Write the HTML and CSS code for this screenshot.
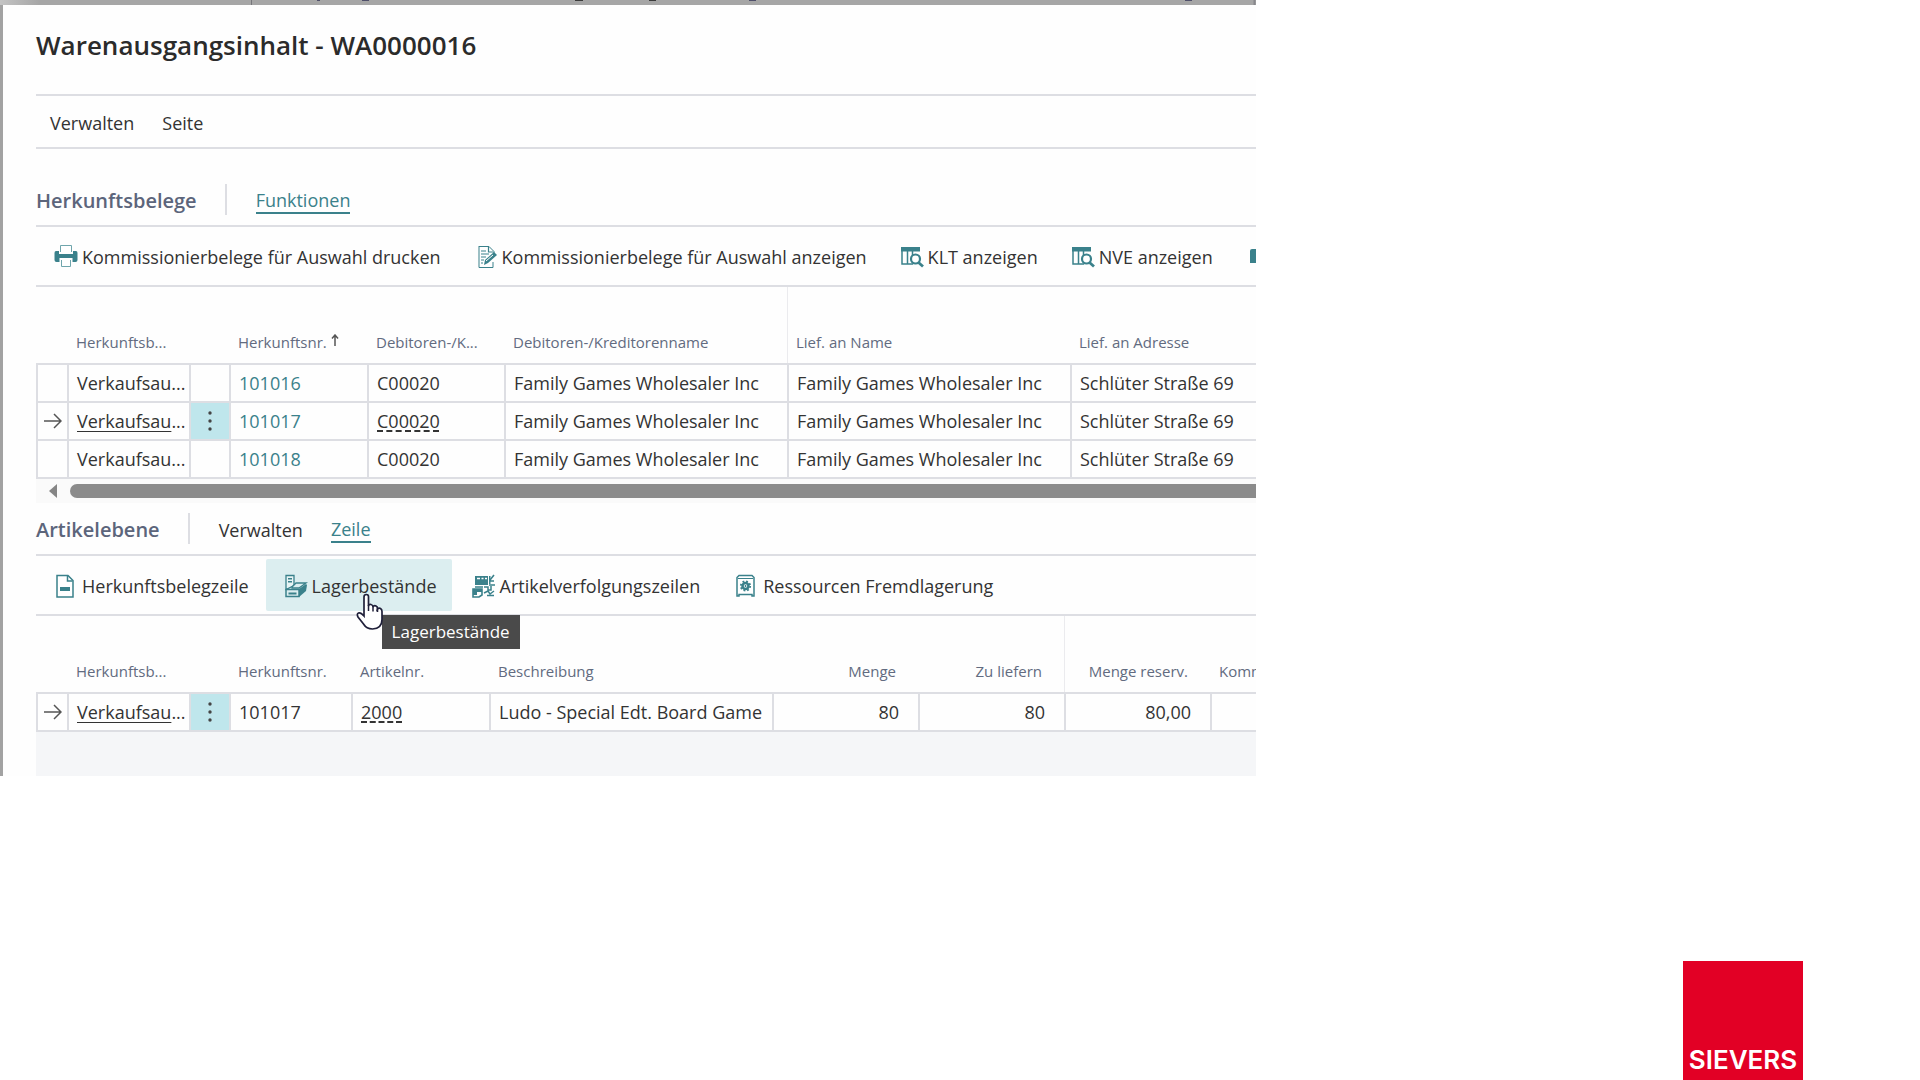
FILE: index.html
```html
<!DOCTYPE html>
<html lang="de">
<head>
<meta charset="utf-8">
<title>Warenausgangsinhalt - WA0000016</title>
<link rel="stylesheet" href="styles.css">
</head>
<body>
<main class="screen">
  <div class="backdrop" aria-hidden="true">
    <svg width="1256" height="5" viewBox="0 0 1256 5">
      <path d="M251.500 0V5" stroke="#77777b" stroke-width="1"/>
      <path d="M1254.500 0V5" stroke="#88888c" stroke-width="2"/>
      <g fill="#50506a"><rect x="317" width="3" height="1"/><rect x="362" width="7" height="1"/><rect x="749" width="7" height="1"/><rect x="1185" width="7" height="1"/></g>
      <g fill="#3c3c3c"><rect x="575" width="8" height="1"/><rect x="649" width="7" height="1"/></g>
    </svg>
  </div>
  <div class="dialog">
    <header class="dialog-head"><h1>Warenausgangsinhalt - WA0000016</h1></header>
    <nav class="menubar">
      <button class="tab">Verwalten</button>
      <button class="tab">Seite</button>
    </nav>

    <section>
      <div class="section-head section-head-tall">
        <h2>Herkunftsbelege</h2>
        <div class="tabs"><button class="tab tab-active">Funktionen</button></div>
      </div>
      <div class="toolbar">
        <button class="action">
          <svg class="icon" viewBox="0 0 24 24"><path d="M6.500 7V.5h11V7M7.500 15v6.500h9V15" fill="#fff" stroke="#6fa5ac"/><path d="M2 6h3v3h14V6h3q1.500 0 1.500 2v7q0 2-2 2h-3v-4h-13v4h-3q-2 0-2-2V8q0-2 1.500-2z"/></svg>
          Kommissionierbelege für Auswahl drucken
        </button>
        <button class="action">
          <svg class="icon" viewBox="0 0 24 24"><path d="M5 1.500h10l5 5V8M5 1v21.500h14V17" fill="none" stroke="currentColor"/><path d="M14.500 1.500v5.500h5M7 6h5M7 9h8M7 12h5M7 15h3M7 18h2" fill="none" stroke="currentColor" stroke-width="1.200"/><path d="M10 20l1-5 9-8 3 3-9 8z"/><path d="M12 16l7-6" stroke="#fff"/></svg>
          Kommissionierbelege für Auswahl anzeigen
        </button>
        <button class="action">
          <svg class="icon" viewBox="0 0 24 24"><path d="M1 2h19v4.500H1z"/><path d="M2 6v13h11M7.500 6v13M12.500 6v4" fill="none" stroke="currentColor" stroke-width="1.500"/><circle cx="15.500" cy="14" r="4.500" fill="#fff" stroke="currentColor" stroke-width="2.200"/><path d="M18.500 17.500L23 21.500" stroke="currentColor" stroke-width="2.800"/></svg>
          KLT anzeigen
        </button>
        <button class="action">
          <svg class="icon" viewBox="0 0 24 24"><path d="M1 2h19v4.500H1z"/><path d="M2 6v13h11M7.500 6v13M12.500 6v4" fill="none" stroke="currentColor" stroke-width="1.500"/><circle cx="15.500" cy="14" r="4.500" fill="#fff" stroke="currentColor" stroke-width="2.200"/><path d="M18.500 17.500L23 21.500" stroke="currentColor" stroke-width="2.800"/></svg>
          NVE anzeigen
        </button>
        <button class="action" aria-label="Mehr">
          <svg class="icon" viewBox="0 0 24 24"><path d="M4 6q0-2 2-2h16v14H4z"/></svg>
        </button>
      </div>

      <table class="grid">
        <colgroup><col class="w-mark"><col class="w-type"><col class="w-menu"><col class="w-138"><col class="w-137"><col class="w-283"><col class="w-283"><col></colgroup>
        <thead>
          <tr><th></th><th>Herkunftsb...</th><th></th>
          <th>Herkunftsnr. <svg class="sort" viewBox="0 0 8 14"><path d="M4 12V1M1 4.500L4 1l3 3.500" fill="none" stroke="currentColor" stroke-width="1.500"/></svg></th>
          <th>Debitoren-/K...</th><th>Debitoren-/Kreditorenname</th><th class="frozen">Lief. an Name</th><th>Lief. an Adresse</th></tr>
        </thead>
        <tbody>
          <tr><td></td><td>Verkaufsau...</td><td></td><td><a href="#101016">101016</a></td><td>C00020</td><td>Family Games Wholesaler Inc</td><td>Family Games Wholesaler Inc</td><td>Schlüter Straße 69</td></tr>
          <tr>
            <td class="mark"><svg class="arrow" viewBox="0 0 18 16"><path d="M0 8h17M10 1l7 7-7 7" fill="none" stroke="currentColor" stroke-width="1.500"/></svg></td>
            <td><span class="line">Verkaufsau</span>...</td>
            <td class="mark active"><button class="more" aria-label="Zeilenmenü"><svg viewBox="0 0 4 20"><circle cx="2" cy="2" r="1.700"/><circle cx="2" cy="10" r="1.700"/><circle cx="2" cy="18" r="1.700"/></svg></button></td>
            <td><a href="#101017">101017</a></td><td><span class="dashed">C00020</span></td><td>Family Games Wholesaler Inc</td><td>Family Games Wholesaler Inc</td><td>Schlüter Straße 69</td></tr>
          <tr><td></td><td>Verkaufsau...</td><td></td><td><a href="#101018">101018</a></td><td>C00020</td><td>Family Games Wholesaler Inc</td><td>Family Games Wholesaler Inc</td><td>Schlüter Straße 69</td></tr>
        </tbody>
      </table>
      <div class="scrollbar">
        <svg class="scroll-left" viewBox="0 0 8 14"><path d="M8 0v14L0 7z"/></svg>
        <div class="thumb"></div>
      </div>
    </section>

    <section>
      <div class="section-head">
        <h2>Artikelebene</h2>
        <div class="tabs"><button class="tab">Verwalten</button><button class="tab tab-active">Zeile</button></div>
      </div>
      <div class="toolbar toolbar-spaced">
        <button class="action">
          <svg class="icon" viewBox="0 0 24 24"><path d="M3 1.500h11l5 5V23H3z" fill="#fff" stroke="currentColor" stroke-width="1.500"/><path d="M13.500 2v5h5" fill="none" stroke="currentColor" stroke-width="1.500"/><path d="M6 13h10v4H6z"/></svg>
          Herkunftsbelegzeile
        </button>
        <div class="hover-host">
          <button class="action action-hover" aria-describedby="tip">
            <svg class="icon" viewBox="0 0 24 24"><path d="M2 1.500h8v10l-8 4z" fill="#e8f4f5" stroke="currentColor" stroke-width="1.300"/><path d="M4 4h4v1.500H4zM4 7h4v1.500H4z"/><path d="M2 15.500h13v7H2z" fill="#dceef0" stroke="currentColor" stroke-width="1.500"/><path d="M15 15l7-5 1 1-1 6-7 6z"/><path d="M8 13l4-4h10l-7 5H8z" fill="#dceef0" stroke="currentColor" stroke-width="1.300"/><path d="M4.500 18.500h8v2h-8z"/></svg>
            Lagerbestände
          </button>
          <svg class="pointer" viewBox="0 0 28 38"><path d="M8 21V4q0-2.500 2.300-2.500T12.500 4v9q.5-2 2.500-1.500t2 2.500q1-2 3-1t1.500 3q1.500-1.500 3-.5t1.500 3v8q0 9-9.500 9.500-6 0-9-5L2 24q-1.500-3 .5-4t5.500 3z" fill="#fff" stroke="#20203a" stroke-width="1.700"/><path d="M12.500 12v6M17 14v4.500M21.500 15v4" stroke="#20203a" stroke-width="1.500"/></svg>
          <div class="tooltip" id="tip" role="tooltip">Lagerbestände</div>
        </div>
        <button class="action">
          <svg class="icon" viewBox="0 0 24 24"><path d="M3 2h13v9H3z"/><path d="M5 4.500h3M9.500 4.500h2M13 4.500h2" stroke="#fff" stroke-width="1.500"/><path d="M22 1l-4 5M22 7h-5M17 11h6M3 13h8M1 15h9v6l-3 2H1z" fill="none" stroke="currentColor" stroke-width="1.600"/><path d="M1 15h9v3H5v3H1zM17 2h1.500v8H17z"/><path d="M12 13h4v3h3v-4M12 19l4-2 2 3 4-3M15 21.500h7" fill="none" stroke="currentColor" stroke-width="1.500"/></svg>
          Artikelverfolgungszeilen
        </button>
        <button class="action">
          <svg class="icon" viewBox="0 0 24 24"><path d="M4 1.500h13l2 2V22h-2v-1.500H4V22H2V3.500z" fill="#fff" stroke="currentColor" stroke-width="1.500"/><path d="M3 4.500h15" stroke="currentColor"/><circle cx="10.500" cy="12" r="3" fill="none" stroke="currentColor" stroke-width="2.500"/><circle cx="10.500" cy="12" r="4.700" fill="none" stroke="currentColor" stroke-width="1.800" stroke-dasharray="1.850 1.850"/><path d="M10.500 11v2" stroke="currentColor" stroke-width="1.500"/></svg>
          Ressourcen Fremdlagerung
        </button>
      </div>

      <table class="grid">
        <colgroup><col class="w-mark"><col class="w-type"><col class="w-menu"><col class="w-type"><col class="w-138"><col class="w-283"><col class="w-146"><col class="w-146"><col class="w-146"><col></colgroup>
        <thead>
          <tr><th></th><th>Herkunftsb...</th><th></th><th>Herkunftsnr.</th><th>Artikelnr.</th><th>Beschreibung</th><th class="num">Menge</th><th class="num">Zu liefern</th><th class="num frozen">Menge reserv.</th><th>Komm</th></tr>
        </thead>
        <tbody>
          <tr>
            <td class="mark"><svg class="arrow" viewBox="0 0 18 16"><path d="M0 8h17M10 1l7 7-7 7" fill="none" stroke="currentColor" stroke-width="1.500"/></svg></td>
            <td><span class="line">Verkaufsau</span>...</td>
            <td class="mark active"><button class="more" aria-label="Zeilenmenü"><svg viewBox="0 0 4 20"><circle cx="2" cy="2" r="1.700"/><circle cx="2" cy="10" r="1.700"/><circle cx="2" cy="18" r="1.700"/></svg></button></td>
            <td>101017</td><td><span class="dashed">2000</span></td><td>Ludo - Special Edt. Board Game</td><td class="num">80</td><td class="num">80</td><td class="num">80,00</td><td></td></tr>
        </tbody>
      </table>
      <div class="empty"></div>
    </section>
  </div>
</main>
<footer class="page-foot"><div class="logo">SIEVERS</div></footer>
</body>
</html>
```
FILE: styles.css
```css
:root {
  --line: #dddee3;
  --teal: #3a818b;
  --text: #333;
  --muted: #626b80;
}
* { box-sizing: border-box; }
body {
  margin: 0;
  min-height: 100vh;
  display: flex;
  flex-direction: column;
  justify-content: space-between;
  background: #fff;
  color: var(--text);
  font: 18px/24px "Open Sans", "Noto Sans", sans-serif;
}
button {
  border: 0;
  padding: 0;
  background: none;
  color: inherit;
  font: inherit;
  white-space: nowrap;
}
h1, h2 { margin: 0; font-weight: 600; }

/* dialog over the dimmed page */
.screen {
  width: 65.4167%;
  overflow: hidden;
  background: #a2a2a2;
}
.backdrop {
  height: 5px;
  overflow: hidden;
  background: linear-gradient(90deg, #c4c4c4, #a6a6a6 40px);
}
.backdrop svg { display: block; }
.dialog {
  margin-left: 3px;
  padding-left: 33px;
  background: #fefefe;
}
.dialog-head { height: 89px; padding-top: 22px; }
h1 { font-size: 26px; line-height: 36px; color: #2b2b2b; }
.menubar {
  display: flex;
  gap: 28px;
  height: 55px;
  padding: 3px 14px 0;
  border-top: 2px solid var(--line);
  border-bottom: 2px solid var(--line);
}

/* section headings with their tabs */
.section-head {
  display: flex;
  align-items: flex-end;
  height: 51px;
  padding-bottom: 10px;
}
.section-head-tall { height: 76px; }
h2 {
  padding-right: 28px;
  font-size: 20px;
  line-height: 28px;
  color: #5c657b;
}
.tabs {
  display: flex;
  gap: 28px;
  height: 31px;
  padding-left: 29px;
  border-left: 2px solid var(--line);
}
.tabs .tab { height: 30px; padding-top: 3px; }
.tab-active { border-bottom: 2px solid var(--teal); color: var(--teal); }
.tabs .tab-active { padding-top: 4px; }

/* action bars */
.toolbar {
  display: flex;
  height: 62px;
  padding: 3px 0;
  border-top: 2px solid var(--line);
  border-bottom: 2px solid var(--line);
}
.toolbar-spaced { gap: 2px; }
.action {
  display: flex;
  flex: none;
  align-items: center;
  gap: 4px;
  height: 52px;
  padding: 2px 15px 0 18px;
  border-radius: 2px;
}
.action-hover { background: #dceef0; }
.icon { width: 24px; height: 24px; color: var(--teal); fill: var(--teal); }
.hover-host { position: relative; }
.pointer { position: absolute; left: 90px; top: 34px; width: 28px; height: 38px; z-index: 2; }
.tooltip {
  position: absolute;
  left: 116px;
  top: 56px;
  padding: 5px 10px;
  background: #4a4a4a;
  color: #fff;
  font-size: 17px;
}

/* data grids */
.grid {
  width: 100%;
  table-layout: fixed;
  border-collapse: separate;
  border-spacing: 0;
  border-bottom: 2px solid var(--line);
}
.w-mark { width: 31px; }
.w-type { width: 122px; }
.w-menu { width: 40px; }
.w-138 { width: 138px; }
.w-137 { width: 137px; }
.w-283 { width: 283px; }
.w-146 { width: 146px; }
th {
  height: 76px;
  padding: 0 0 11px 8px;
  border-left: 1px solid transparent;
  vertical-align: bottom;
  text-align: left;
  white-space: nowrap;
  font-size: 15px;
  line-height: 20px;
  font-weight: 400;
  color: var(--muted);
}
th.frozen { border-left-color: #ebebee; }
td {
  height: 38px;
  padding: 0 0 0 8px;
  border-left: 2px solid var(--line);
  border-top: 2px solid var(--line);
  white-space: nowrap;
}
th.num { padding-right: 22px; text-align: right; }
td.num { padding-right: 19px; text-align: right; }
.grid a { color: var(--teal); text-decoration: none; }
.mark { padding: 0; text-align: center; color: #555; }
.active { background: #bfe6ec; }
.arrow { display: block; width: 18px; height: 16px; margin: 0 auto; }
.more { display: block; width: 100%; height: 24px; }
.more svg { display: block; width: 4px; height: 20px; margin: 2px auto; fill: #444; }
.sort { width: 8px; height: 14px; color: #555; }
.line, .dashed {
  text-decoration: underline 1px;
  text-underline-offset: 3px;
  text-decoration-skip-ink: none;
}
.dashed { text-decoration: underline dashed 2px; text-underline-offset: 2px; }

.scrollbar {
  display: flex;
  align-items: center;
  height: 24px;
  padding-left: 13px;
  gap: 13px;
  background: #fafafa;
}
.scroll-left { width: 8px; height: 14px; fill: #858585; }
.thumb {
  flex: 1;
  height: 14px;
  border-radius: 7px 0 0 7px;
  background: #8b8b8b;
}
.empty { height: 44px; background: #f5f6f8; }

/* brand block in the page corner */
.page-foot {
  display: flex;
  justify-content: flex-end;
  padding-right: 117px;
}
.logo {
  display: flex;
  align-items: flex-end;
  justify-content: center;
  width: 120px;
  height: 119px;
  padding-bottom: 4px;
  background: #e20025;
  color: #fff;
  font: 600 26px/32px Inter, sans-serif;
}
```
